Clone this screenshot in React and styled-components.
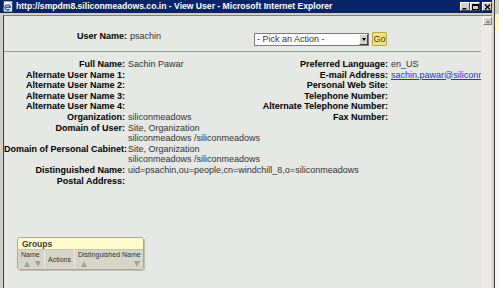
import styled, { createGlobalStyle } from "styled-components";

const GlobalStyle = createGlobalStyle`
  html, body {
    margin: 0;
    padding: 0;
    width: 499px;
    height: 288px;
    overflow: hidden;
    background: #ffffff;
  }
  body {
    font-family: "Liberation Sans", Arial, sans-serif;
  }
`;

const Page = styled.div`
  display: flex;
  width: 499px;
  height: 288px;
`;

const Window = styled.div`
  width: 492px;
  height: 288px;
  display: flex;
  flex-direction: column;
  background: #d4d0c8;
  padding-right: 2px;
  border-right: 1px solid #404040;
`;

const TitleBar = styled.div`
  height: 13px;
  background: #0a246a;
  display: flex;
  align-items: center;
  padding-left: 2px;
`;

const TitleText = styled.div`
  flex: 1;
  margin-left: 3px;
  color: #ffffff;
  font-weight: bold;
  font-size: 8.6px;
  line-height: 13px;
  white-space: nowrap;
`;

const Controls = styled.div`
  display: flex;
  align-items: center;
`;

const WinButton = styled.div`
  width: 10px;
  height: 9px;
  box-sizing: border-box;
  background: #d4d0c8;
  border: 1px solid;
  border-color: #ffffff #404040 #404040 #ffffff;
  margin-left: ${(p) => (p.gap ? "2px" : "0")};
  display: flex;
  align-items: center;
  justify-content: center;
`;

const Body = styled.div`
  flex: 1;
  display: flex;
  padding: 2px 0 0 3px;
  min-height: 0;
`;

const Content = styled.div`
  width: 477px;
  background: #e5e8e4;
  border-left: 1px solid #404040;
  border-top: 1px solid #808080;
  overflow: hidden;
  font-size: 9px;
  color: #333333;
`;

const Scrollbar = styled.div`
  width: 11px;
  background: #eceae5;
  border-top: 1px solid #808080;
  padding: 1px 0 0 2px;
  box-sizing: border-box;
`;

const ScrollButton = styled.div`
  width: 9px;
  height: 8px;
  box-sizing: border-box;
  background: #d4d0c8;
  border: 1px solid;
  border-color: #ffffff #808080 #808080 #ffffff;
  display: flex;
  align-items: center;
  justify-content: center;
  &::after {
    content: "";
    border-left: 2.5px solid transparent;
    border-right: 2.5px solid transparent;
    border-bottom: 3px solid #808080;
  }
`;

const TopRow = styled.div`
  height: 36px;
  box-sizing: border-box;
  padding-top: 14px;
  display: flex;
  align-items: flex-start;
  border-bottom: 1px solid #9a9a9a;
`;

const TopField = styled.div`
  width: 250px;
  display: flex;
  line-height: 13px;
`;

const TopLabel = styled.div`
  width: 126px;
  box-sizing: border-box;
  padding-right: 3px;
  text-align: right;
  font-weight: bold;
  color: #000;
`;

const Select = styled.div`
  margin-top: 3px;
  width: 115px;
  height: 13px;
  box-sizing: border-box;
  border: 1px solid #7a7a7a;
  background: #ffffff;
  display: flex;
  align-items: center;
  color: #333;
  line-height: 11px;
`;

const SelectText = styled.span`
  flex: 1;
  padding-left: 2px;
`;

const SelectArrow = styled.div`
  width: 9px;
  height: 11px;
  box-sizing: border-box;
  background: #d4d0c8;
  border: 1px solid;
  border-color: #ffffff #404040 #404040 #ffffff;
  display: flex;
  align-items: center;
  justify-content: center;
  &::after {
    content: "";
    border-left: 2.5px solid transparent;
    border-right: 2.5px solid transparent;
    border-top: 3px solid #000;
  }
`;

const GoButton = styled.div`
  margin: 2px 0 0 3px;
  width: 15px;
  height: 14px;
  box-sizing: border-box;
  background: #f2e27a;
  border: 1px solid #b9a94a;
  border-radius: 1px;
  display: flex;
  align-items: center;
  justify-content: center;
  font-size: 9px;
  color: #3a3a20;
`;

const Details = styled.div`
  display: flex;
  align-items: flex-start;
  padding-top: 7px;
  line-height: 10.6px;
`;

const FieldGrid = styled.div`
  display: grid;
  grid-template-columns: ${(p) => p.labelWidth}px auto;
  width: ${(p) => p.width}px;
  flex: none;
`;

const Label = styled.div`
  text-align: right;
  padding-right: 3px;
  font-weight: bold;
  color: #000;
  white-space: nowrap;
`;

const Value = styled.div`
  white-space: nowrap;
  min-height: 10.6px;
`;

const Mail = styled.a`
  color: #2a2aff;
  text-decoration: underline;
`;

const Groups = styled.div`
  margin: 51px 0 0 13px;
  width: 125px;
  border: 1px solid #a9a99c;
  border-radius: 3px;
  overflow: hidden;
  box-shadow: 1px 1px 0 #bdbdb2;
`;

const GroupsHead = styled.div`
  height: 11px;
  background: #fffbcc;
  border-bottom: 1px solid #c8c6a8;
  padding-left: 4px;
  font-size: 8.5px;
  font-weight: bold;
  line-height: 12px;
  color: #3c3c3c;
`;

const ColumnRow = styled.div`
  display: flex;
  height: 19px;
  background: #d5d5c9;
`;

const Column = styled.div`
  width: ${(p) => p.w}px;
  box-sizing: border-box;
  border-left: ${(p) => (p.first ? "none" : "1px solid #ececE4")};
  padding: 1px 2px 0 3px;
  font-size: 7px;
  line-height: 8px;
  color: #333;
  display: flex;
  flex-direction: column;
  justify-content: ${(p) => (p.center ? "center" : "flex-start")};
  white-space: nowrap;
`;

const Sorts = styled.div`
  display: flex;
  justify-content: space-between;
  padding: 2px 1px 0 3px;
`;

const Arrow = styled.span`
  width: 0;
  height: 0;
  border-left: 3.5px solid transparent;
  border-right: 3.5px solid transparent;
  ${(p) =>
    p.down ? "border-top: 6px solid #a3a399;" : "border-bottom: 6px solid #a3a399;"}
`;

const Behind = styled.div`
  flex: 1;
  background: linear-gradient(
    #d4d0c8 0,
    #d4d0c8 14px,
    #fff6c4 14px,
    #fff6c4 30px,
    #f7f7f7 30px
  );
`;

const IeIcon = () => (
  <svg width="11" height="11" viewBox="0 0 11 11">
    <rect x="2" y="0.5" width="8" height="10" fill="#ffffff" stroke="#9aa" strokeWidth="0.6" />
    <path
      d="M3 6.2h5.2a2.6 2.6 0 1 0-0.6 1.9"
      fill="none"
      stroke="#1a5fd0"
      strokeWidth="1.5"
    />
    <path d="M1 8.5c2-4 6-6 9-6" fill="none" stroke="#e8a020" strokeWidth="0.8" />
  </svg>
);

const leftFields = [
  ["Full Name:", "Sachin Pawar"],
  ["Alternate User Name 1:", ""],
  ["Alternate User Name 2:", ""],
  ["Alternate User Name 3:", ""],
  ["Alternate User Name 4:", ""],
  ["Organization:", "siliconmeadows"],
  ["Domain of User:", ["Site, Organization", "siliconmeadows /siliconmeadows"]],
  ["Domain of Personal Cabinet:", ["Site, Organization", "siliconmeadows /siliconmeadows"]],
  ["Distinguished Name:", "uid=psachin,ou=people,cn=windchill_8,o=siliconmeadows"],
  ["Postal Address:", ""],
];

const rightFields = [
  ["Preferred Language:", "en_US"],
  ["E-mail Address:", <Mail href="#">sachin.pawar@siliconmeadows.co.in</Mail>],
  ["Personal Web Site:", ""],
  ["Telephone Number:", ""],
  ["Alternate Telephone Number:", ""],
  ["Fax Number:", ""],
];

const renderFields = (fields) =>
  fields.map(([label, value]) => [
    <Label key={label + "l"}>{label}</Label>,
    <Value key={label + "v"}>
      {Array.isArray(value)
        ? value.map((line) => <div key={line}>{line}</div>)
        : value}
    </Value>,
  ]);

export default function App() {
  return (
    <>
      <GlobalStyle />
      <Page>
        <Window>
          <TitleBar>
            <IeIcon />
            <TitleText>
              http://smpdm8.siliconmeadows.co.in - View User - Microsoft Internet Explorer
            </TitleText>
            <Controls>
              <WinButton>
                <svg width="6" height="6" viewBox="0 0 6 6">
                  <rect x="0.5" y="4" width="4" height="1.5" fill="#000" />
                </svg>
              </WinButton>
              <WinButton>
                <svg width="7" height="6" viewBox="0 0 7 6">
                  <rect x="0.5" y="0.5" width="6" height="5" fill="none" stroke="#000" strokeWidth="1" />
                  <rect x="0.5" y="0.5" width="6" height="1.5" fill="#000" />
                </svg>
              </WinButton>
              <WinButton gap>
                <svg width="7" height="6" viewBox="0 0 7 6">
                  <path d="M1 0.5l5 5M6 0.5l-5 5" stroke="#000" strokeWidth="1.3" />
                </svg>
              </WinButton>
            </Controls>
          </TitleBar>
          <Body>
            <Content>
              <TopRow>
                <TopField>
                  <TopLabel>User Name:</TopLabel>
                  <span>psachin</span>
                </TopField>
                <Select>
                  <SelectText>- Pick an Action -</SelectText>
                  <SelectArrow />
                </Select>
                <GoButton>Go</GoButton>
              </TopRow>
              <Details>
                <FieldGrid labelWidth={124} width={258}>
                  {renderFields(leftFields)}
                </FieldGrid>
                <FieldGrid labelWidth={129} width={219}>
                  {renderFields(rightFields)}
                </FieldGrid>
              </Details>
              <Groups>
                <GroupsHead>Groups</GroupsHead>
                <ColumnRow>
                  <Column w={26} first>
                    Name
                    <Sorts>
                      <Arrow />
                      <Arrow down />
                    </Sorts>
                  </Column>
                  <Column w={30} center>
                    Actions
                  </Column>
                  <Column w={69}>
                    Distinguished Name
                    <Sorts>
                      <Arrow />
                      <Arrow down />
                    </Sorts>
                  </Column>
                </ColumnRow>
              </Groups>
            </Content>
            <Scrollbar>
              <ScrollButton />
            </Scrollbar>
          </Body>
        </Window>
        <Behind />
      </Page>
    </>
  );
}
